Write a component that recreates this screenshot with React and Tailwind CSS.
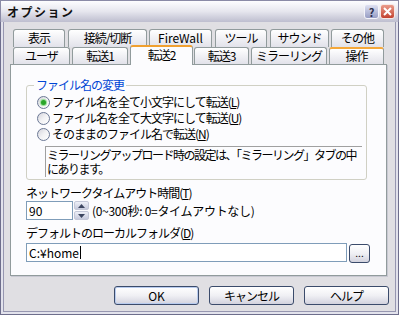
import React from "react";

const TAB_BASE =
  "flex justify-center rounded-t-[3px] border border-b-0 border-[#919b9c] bg-linear-to-b from-white to-[#e2e2ea] pt-[1px] leading-[14px] whitespace-nowrap";

const row1 = [
  { label: "表示", cls: "w-[52px]" },
  { label: "接続/切断", cls: "w-[79px] ml-[3px]" },
  { label: "FireWall", cls: "w-[63px] ml-[2px] tracking-normal" },
  { label: "ツール", cls: "w-[52px] ml-[3px]" },
  { label: "サウンド", cls: "w-[59px] ml-[3px]" },
  { label: "その他", cls: "w-[53px] ml-[2px]" },
];

function U({ children }) {
  return <span className="underline underline-offset-[1px]">{children}</span>;
}

function Radio({ checked }) {
  return (
    <span className="inline-flex h-[13px] w-[13px] shrink-0 items-center justify-center rounded-full border border-[#6b7895] bg-linear-to-br from-[#d4d4dc] via-[#f2f2f4] to-white">
      {checked && (
        <span className="h-[5px] w-[5px] rounded-full bg-[#2aa52a] shadow-[0_0_1px_1px_#8fdc8f]" />
      )}
    </span>
  );
}

function XpButton({ children, cls = "", isDefault = false }) {
  return (
    <div
      className={
        "flex items-center justify-center rounded-[3px] border border-[#3b4b6b] bg-linear-to-b from-white via-[#f0f0f4] to-[#d2d2de] leading-[14px] " +
        (isDefault ? "shadow-[inset_0_0_0_1px_#b8cbee] " : "") +
        cls
      }
    >
      {children}
    </div>
  );
}

function SpinArrow({ up }) {
  return (
    <svg width="7" height="4" viewBox="0 0 7 4">
      {up ? (
        <path d="M0 4 L3.5 0 L7 4 Z" fill="#3c4660" />
      ) : (
        <path d="M0 0 L3.5 4 L7 0 Z" fill="#3c4660" />
      )}
    </svg>
  );
}

export default function App() {
  return (
    <div className="flex h-[315px] w-[399px] flex-col font-['Noto_Sans_CJK_JP','Noto_Sans',sans-serif] text-[12px] leading-[14px] tracking-[-1px] text-black">
      {/* Title bar */}
      <div className="flex h-[22px] shrink-0 items-center border-x border-t border-[#8a8aa6] bg-linear-to-b from-[#fdfdff] via-[#e6e6ee] to-[#bebecf] pl-[6px] pr-[3px]">
        <span className="text-[12px] font-bold tracking-[1.5px] text-[#111]">オプション</span>
        <div className="ml-auto flex gap-[1px]">
          <div className="flex h-[15px] w-[15px] items-center justify-center rounded-[3px] border border-[#f4f4fa] bg-linear-to-b from-[#dfe1f2] to-[#979dc4] text-[11px] font-bold tracking-normal text-[#2c2c4a]">
            ?
          </div>
          <div className="flex h-[15px] w-[15px] items-center justify-center rounded-[3px] border border-[#f7e8e4] bg-linear-to-b from-[#e99a8a] to-[#c2412f]">
            <svg width="9" height="9" viewBox="0 0 9 9">
              <path d="M1 1 L8 8 M8 1 L1 8" stroke="white" strokeWidth="2" />
            </svg>
          </div>
        </div>
      </div>

      {/* Body with frame */}
      <div className="flex flex-1 flex-col border-x border-b border-[#6e6e8c] bg-[#e2e2ec] px-[2px] pb-[2px]">
        <div className="flex flex-1 flex-col border-x border-b border-[#9696b0] bg-[#e0dfe3] pl-[6px] pt-[7px]">
          {/* Tabs */}
          <div className="ml-[3px] flex flex-col">
            <div className="flex h-[18px]">
              {row1.map((t) => (
                <div key={t.label} className={TAB_BASE + " h-[18px] " + t.cls}>
                  {t.label}
                </div>
              ))}
            </div>
            <div className="flex h-[17px]">
              <div className={TAB_BASE + " h-[17px] w-[57px]"}>ユーザ</div>
              <div className={TAB_BASE + " ml-[2px] h-[17px] w-[56px]"}>転送1</div>
              <div className="relative z-10 -mt-[2px] ml-[2px] flex h-[20px] w-[63px] justify-center rounded-t-[3px] border-x border-t-2 border-[#919b9c] border-t-[#f0a030] bg-[#fcfcfe] pt-[1px] leading-[14px]">
                転送2
              </div>
              <div className={TAB_BASE + " ml-[1px] h-[17px] w-[55px]"}>転送3</div>
              <div className={TAB_BASE + " ml-[2px] h-[17px] w-[76px]"}>ミラーリング</div>
              <div className="ml-[2px] flex h-[17px] w-[55px] justify-center rounded-t-[3px] border border-b-0 border-t-2 border-[#919b9c] border-t-[#f5a83a] bg-linear-to-b from-white to-[#e2e2ea] leading-[14px]">
                操作
              </div>
            </div>
          </div>

          {/* Panel */}
          <div className="flex h-[212px] w-[377px] flex-col border border-[#919b9c] bg-[#fcfcfe] pl-[15px] pt-[13px] shadow-[1px_1px_0_#c8c8d2]">
            <fieldset className="flex h-[102px] w-[341px] flex-col rounded-[3px] border border-[#d0d0c4] pt-0">
              <legend className="ml-[7px] px-[2px] leading-[14px] text-[#0046d5]">ファイル名の変更</legend>
              <div className="mt-[2px] flex h-[16px] items-center gap-[2px] pl-[10px]">
                <Radio checked />
                <span>
                  ファイル名を全て小文字にして転送(<U>L</U>)
                </span>
              </div>
              <div className="flex h-[16px] items-center gap-[2px] pl-[10px]">
                <Radio />
                <span>
                  ファイル名を全て大文字にして転送(<U>U</U>)
                </span>
              </div>
              <div className="flex h-[16px] items-center gap-[2px] pl-[10px]">
                <Radio />
                <span>
                  そのままのファイル名で転送(<U>N</U>)
                </span>
              </div>
              <div className="ml-[18px] mt-[4px] h-[31px] w-[317px] whitespace-nowrap border-l border-t border-[#a0a0a0] pl-[1px] pt-[1px] leading-[14px] tracking-[-1.5px]">
                ミラーリングアップロード時の設定は、「ミラーリング」タブの中
                <br />
                にあります。
              </div>
            </fieldset>

            <div className="mt-[6px]">
              ネットワークタイムアウト時間(<U>T</U>)
            </div>
            <div className="mt-[1px] flex items-center">
              <div className="h-[19px] w-[47px] border border-[#7f9db9] bg-white pl-[2px] leading-[17px] tracking-normal">
                90
              </div>
              <div className="ml-[1px] flex h-[19px] w-[15px] flex-col gap-[1px]">
                <div className="flex h-[9px] items-center justify-center rounded-[2px] border border-[#c4c8d8] bg-linear-to-b from-[#eef0f8] to-[#c6cadc]">
                  <SpinArrow up />
                </div>
                <div className="flex h-[9px] items-center justify-center rounded-[2px] border border-[#c4c8d8] bg-linear-to-b from-[#eef0f8] to-[#c6cadc]">
                  <SpinArrow />
                </div>
              </div>
              <span className="ml-[3px] whitespace-nowrap tracking-[-0.3px]">(0~300秒: 0=タイムアウトなし)</span>
            </div>

            <div className="mt-[6px]">
              デフォルトのローカルフォルダ(<U>D</U>)
            </div>
            <div className="mt-[3px] flex items-start">
              <div className="flex h-[19px] w-[321px] items-center border border-[#7f9db9] bg-white pl-[2px] leading-[17px] tracking-normal">
                C:¥home
                <span className="ml-[1px] inline-block h-[13px] w-[1px] bg-black" />
              </div>
              <XpButton cls="ml-[2px] mt-[1px] h-[19px] w-[21px] items-end pb-[2px] tracking-normal text-[10px] leading-[10px]">
                ...
              </XpButton>
            </div>
          </div>

          {/* Buttons */}
          <div className="mt-[10px] flex justify-end gap-[10px] pr-[6px]">
            <XpButton cls="h-[19px] w-[85px] tracking-normal" isDefault>
              OK
            </XpButton>
            <XpButton cls="h-[19px] w-[85px]">キャンセル</XpButton>
            <XpButton cls="h-[19px] w-[85px]">ヘルプ</XpButton>
          </div>
        </div>
      </div>
    </div>
  );
}
